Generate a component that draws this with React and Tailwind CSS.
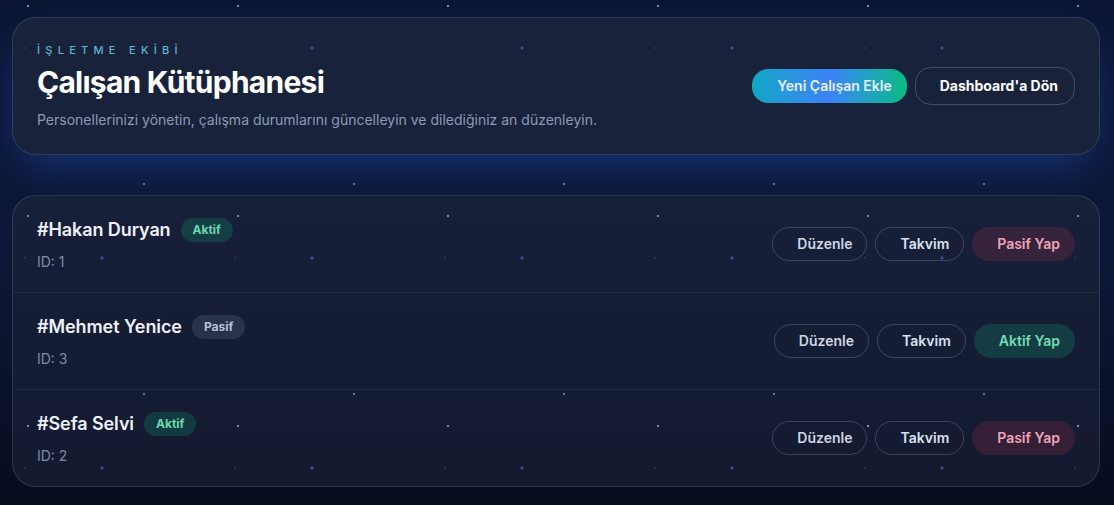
import React from "react";

const employees = [
  { id: 1, name: "Hakan Duryan", active: true },
  { id: 3, name: "Mehmet Yenice", active: false },
  { id: 2, name: "Sefa Selvi", active: true },
];

const StatusBadge = ({ active }) =>
  active ? (
    <span className="rounded-full bg-[#10b981]/20 px-3 py-1 text-xs font-bold text-[#6fd6ae]">
      Aktif
    </span>
  ) : (
    <span className="rounded-full bg-[#64748b]/25 px-3 py-1 text-xs font-bold text-[#b8c2d6]">
      Pasif
    </span>
  );

const EmployeeRow = ({ employee, last }) => (
  <div
    className={`flex items-center justify-between px-6 py-5 ${
      last ? "" : "border-b border-[#94a3b8]/10"
    }`}
  >
    <div className="flex flex-col gap-2">
      <div className="flex items-center gap-2.5">
        <h2 className="text-lg leading-7 font-semibold tracking-[-0.005em] text-[#eef1f8]">#{employee.name}</h2>
        <StatusBadge active={employee.active} />
      </div>
      <p className="text-sm text-[#7f8aa3]">ID: {employee.id}</p>
    </div>

    <div className="flex items-center gap-2">
      <button className="rounded-full border border-[#94a3b8]/30 py-1.5 pl-6 pr-3.5 text-sm font-semibold text-[#cfd6e4]">
        Düzenle
      </button>
      <button className="rounded-full border border-[#94a3b8]/30 py-1.5 pl-6 pr-3.5 text-sm font-semibold text-[#dbe1ee]">
        Takvim
      </button>
      {employee.active ? (
        <button className="rounded-full border border-transparent bg-[#f43f5e]/15 py-1.5 pl-6 pr-3.5 text-sm font-semibold text-[#f0a3b8]">
          Pasif Yap
        </button>
      ) : (
        <button className="rounded-full border border-transparent bg-[#10b981]/20 py-1.5 pl-6 pr-3.5 text-sm font-semibold text-[#74dcb0]">
          Aktif Yap
        </button>
      )}
    </div>
  </div>
);

export default function App() {
  return (
    <div className="relative min-h-screen bg-linear-to-b from-[#0c1634] via-[#0d1838] to-[#070c1e] pt-[17px] pb-6 pl-3 pr-3.5 font-['Inter',sans-serif]">
      {/* Header card */}
      <div className="flex items-center justify-between rounded-3xl border border-[#94a3b8]/20 bg-[#19223b] px-6 py-6 shadow-[0_18px_45px_-12px_rgba(37,99,235,0.45)]">
        <div>
          <p className="text-[11px] leading-4 font-medium tracking-[0.48em] text-[#5eb8cc]">
            İŞLETME EKİBİ
          </p>
          <h1 className="mt-1.5 text-3xl font-bold tracking-tight text-white">Çalışan Kütüphanesi</h1>
          <p className="mt-2.5 text-sm text-[#8c9ab4]">
            Personellerinizi yönetin, çalışma durumlarını güncelleyin ve dilediğiniz an düzenleyin.
          </p>
        </div>
        <div className="flex items-center gap-2">
          <button className="rounded-2xl border border-transparent bg-linear-to-r from-[#0ea5c6] via-[#3b82f6] to-[#10b981] py-1.5 pl-6 pr-3.5 text-sm font-semibold text-[#e8eef9]">
            Yeni Çalışan Ekle
          </button>
          <button className="rounded-2xl border border-[#94a3b8]/35 py-2 pl-6 pr-4 text-sm font-bold text-white">
            Dashboard'a Dön
          </button>
        </div>
      </div>

      {/* Employee list */}
      <div className="mt-10 overflow-hidden rounded-3xl border border-[#94a3b8]/20 bg-linear-to-b from-[#172039] to-[#131a30]">
        {employees.map((e, i) => (
          <EmployeeRow key={e.id} employee={e} last={i === employees.length - 1} />
        ))}
      </div>

      {/* Star dots */}
      <div className="pointer-events-none absolute inset-0 bg-[radial-gradient(circle_at_28px_6px,rgba(160,172,196,0.75)_0,rgba(160,172,196,0.75)_1px,transparent_1.6px),radial-gradient(circle_at_144px_184px,rgba(160,172,196,0.6)_0,rgba(160,172,196,0.6)_1px,transparent_1.6px),radial-gradient(circle_at_102px_48px,rgba(80,96,170,0.7)_0,rgba(80,96,170,0.7)_1.2px,transparent_2px),radial-gradient(circle_at_25px_48px,rgba(90,110,170,0.5)_0,transparent_1.2px)] [background-size:210px_210px]" />
    </div>
  );
}
